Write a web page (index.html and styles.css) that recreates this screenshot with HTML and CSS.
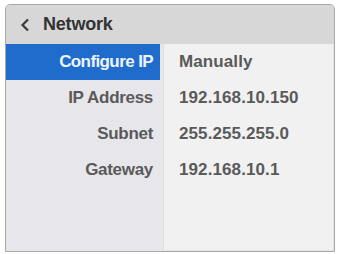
FILE: index.html
```html
<!DOCTYPE html>
<html>
<head>
<meta charset="utf-8">
<link rel="stylesheet" href="styles.css">
</head>
<body>
<div class="panel">
  <div class="header">
    <svg class="back" width="10" height="14" viewBox="0 0 10 14"><path d="M8 1.5 L2.5 7 L8 12.5" fill="none" stroke="#3a3a3a" stroke-width="2.2"/></svg>
    <span class="title">Network</span>
  </div>
  <div class="body">
    <div class="labels">
      <div class="row label selected">Configure IP</div>
      <div class="row label">IP Address</div>
      <div class="row label">Subnet</div>
      <div class="row label">Gateway</div>
    </div>
    <div class="values">
      <div class="row value">Manually</div>
      <div class="row value">192.168.10.150</div>
      <div class="row value">255.255.255.0</div>
      <div class="row value">192.168.10.1</div>
    </div>
  </div>
</div>
</body>
</html>
```
FILE: styles.css
```css
html, body {
  margin: 0;
  padding: 0;
  background: #ffffff;
}
body {
  padding: 4px 4px 0 5px;
  font-family: "Liberation Sans", Arial, sans-serif;
}
.panel {
  width: 328px;
  height: 246px;
  border: 1.5px solid #a8a8a8;
  border-radius: 5px 5px 0 0;
  box-shadow: inset 0 0 0 1px #e4e4e4;
  overflow: hidden;
  display: flex;
  flex-direction: column;
  background: #f1f1f1;
}
.header {
  height: 39px;
  flex: none;
  background: #d7d7d7;
  display: flex;
  align-items: center;
  padding-left: 14px;
  gap: 13px;
}
.back {
  display: block;
}
.title {
  font-size: 18px;
  font-weight: bold;
  color: #333333;
  letter-spacing: -0.2px;
}
.body {
  flex: 1;
  display: flex;
}
.labels {
  width: 157px;
  background: #e7e7eb;
  border-right: 1px solid #e0e0e0;
}
.values {
  flex: 1;
  padding-left: 15px;
}
.row {
  height: 36px;
  display: flex;
  align-items: center;
  font-size: 17px;
  font-weight: bold;
  color: #5a5a5a;
  letter-spacing: -0.3px;
}
.label {
  justify-content: flex-end;
  padding-right: 10px;
}
.label.selected {
  background: #1f6ccc;
  color: #eef4ff;
  margin-right: 3px;
  padding-right: 7px;
  letter-spacing: -0.6px;
}
.value {
  letter-spacing: 0.1px;
}
```
